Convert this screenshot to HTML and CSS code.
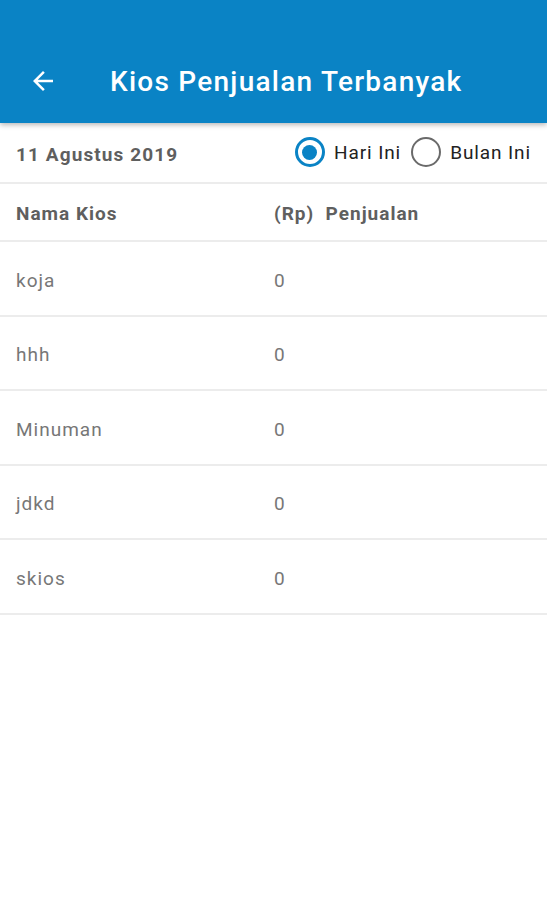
FILE: index.html
```html
<!DOCTYPE html>
<html lang="id">
<head>
<meta charset="utf-8">
<link rel="stylesheet" href="styles.css">
</head>
<body>
<header class="appbar">
  <svg class="back" width="30" height="30" viewBox="0 0 24 24"><path d="M20 11H7.83l5.59-5.59L12 4l-8 8 8 8 1.41-1.41L7.83 13H20v-2z" fill="#fff"/></svg>
  <h1 class="title">Kios Penjualan Terbanyak</h1>
</header>
<section class="filter">
  <div class="date">11 Agustus 2019</div>
  <div class="radios">
    <label class="radio"><span class="dot checked"></span>Hari Ini</label>
    <label class="radio"><span class="dot"></span>Bulan Ini</label>
  </div>
</section>
<div class="row head">
  <div class="c1">Nama Kios</div>
  <div class="c2">(Rp)&nbsp; Penjualan</div>
</div>
<div class="row"><div class="c1">koja</div><div class="c2">0</div></div>
<div class="row"><div class="c1">hhh</div><div class="c2">0</div></div>
<div class="row"><div class="c1">Minuman</div><div class="c2">0</div></div>
<div class="row"><div class="c1">jdkd</div><div class="c2">0</div></div>
<div class="row"><div class="c1">skios</div><div class="c2">0</div></div>
</body>
</html>
```
FILE: styles.css
```css
* { box-sizing: border-box; margin: 0; padding: 0; }
body {
  margin: 0;
  font-family: Roboto, "Noto Sans", sans-serif;
  background: #fff;
  width: 547px;
}
.appbar {
  height: 123px;
  background: #0a83c5;
  display: flex;
  align-items: flex-end;
  padding: 0 0 24px 28px;
  box-shadow: 0 2px 5px rgba(0,0,0,0.28);
  position: relative;
  z-index: 1;
}
.back { display: block; margin-bottom: 3px; }
.title {
  color: #fff;
  font-size: 28px;
  font-weight: 500;
  letter-spacing: 1.25px;
  margin-left: 52px;
  line-height: 34px;
}
.filter {
  height: 61px;
  display: flex;
  align-items: center;
  justify-content: space-between;
  padding: 0 16px 0 16px;
  border-bottom: 2px solid #ececec;
}
.date {
  font-size: 19px;
  font-weight: 700;
  letter-spacing: 1.1px;
  color: #5f5f5f;
  margin-top: 3px;
}
.radios { display: flex; align-items: center; gap: 10px; margin-top: -1px; }
.radio {
  display: flex;
  align-items: center;
  font-size: 19px;
  letter-spacing: 0.9px;
  color: #222;
}
.dot {
  width: 30px;
  height: 30px;
  border-radius: 50%;
  border: 2.5px solid #6a6a6a;
  margin-right: 9px;
  display: flex;
  align-items: center;
  justify-content: center;
}
.dot.checked { border-color: #0a83c5; border-width: 3px; }
.dot.checked::after {
  content: "";
  width: 15px;
  height: 15px;
  border-radius: 50%;
  background: #0a83c5;
}
.row {
  display: flex;
  align-items: center;
  height: 74.5px;
  padding-left: 16px;
  padding-top: 4px;
  border-bottom: 2px solid #ececec;
  font-size: 19px;
  letter-spacing: 1px;
  color: #777;
}
.row.head {
  height: 58px;
  padding-top: 2px;
  font-weight: 700;
  color: #5f5f5f;
}
.c1 { width: 258px; }
.c2 { flex: 1; }
```
